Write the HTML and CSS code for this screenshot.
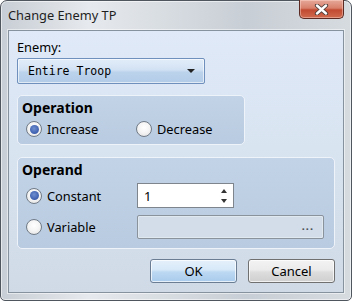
FILE: index.html
```html
<!DOCTYPE html>
<html lang="en">
<head>
  <meta charset="UTF-8" />
  <title>Change Enemy TP</title>
  <link rel="stylesheet" href="styles.css">
</head>
<body>
  <div class="window">
    <div class="titlebar">
      <span class="title">Change Enemy TP</span>
      <button type="button" class="close" aria-label="Close">
        <svg width="15" height="11" viewBox="0 0 15 11">
          <path d="M3 1.5 L12 9.5 M12 1.5 L3 9.5" stroke="#4a3b38" stroke-width="4.2" stroke-linecap="round" />
          <path d="M3 1.5 L12 9.5 M12 1.5 L3 9.5" stroke="#fff" stroke-width="2.4" stroke-linecap="round" />
        </svg>
      </button>
    </div>

    <div class="client">
      <div class="label">Enemy:</div>
      <div class="select">
        <span>Entire Troop</span>
        <span class="arrow"></span>
      </div>

      <section class="group group-operation">
        <h2>Operation</h2>
        <div class="row">
          <label class="option option-wide"><span class="radio is-checked"></span>Increase</label>
          <label class="option"><span class="radio"></span>Decrease</label>
        </div>
      </section>

      <section class="group group-operand">
        <h2>Operand</h2>
        <div class="row row-constant">
          <label class="option option-field"><span class="radio is-checked"></span>Constant</label>
          <div class="spin">
            <span class="value">1</span>
            <span class="spin-arrows">
              <span class="up"></span>
              <span class="down"></span>
            </span>
          </div>
        </div>
        <div class="row row-variable">
          <label class="option option-field"><span class="radio"></span>Variable</label>
          <div class="picker">...</div>
        </div>
      </section>

      <div class="actions">
        <button type="button" class="btn btn-default">OK</button>
        <button type="button" class="btn">Cancel</button>
      </div>
    </div>
  </div>
</body>
</html>
```

FILE: styles.css
```css
* {
  box-sizing: border-box;
}

body {
  margin: 0;
  font-family: "Noto Sans", "Open Sans", sans-serif;
  font-size: 12.8px;
  line-height: 16px;
  color: #000;
  background: #fff;
}

.window {
  width: 352px;
  height: 301px;
  display: flex;
  flex-direction: column;
  padding: 0 7px 7px;
  border: 1px solid #50565e;
  border-radius: 7px 7px 5px 5px;
  background:
    linear-gradient(to right, #c8ced5 0%, #e6e9ed 25%, #d9dee3 45%, #c8ced5 70%, #d6dbe0 100%);
  box-shadow: inset 0 0 0 1px rgba(255, 255, 255, 0.55);
}

.titlebar {
  height: 29px;
  display: flex;
  align-items: flex-start;
  flex-shrink: 0;

  .title {
    padding-top: 6px;
    font-size: 12.8px;
    color: #1e1e1e;
  }

  .close {
    margin: -1px 0 0 auto;
    width: 45px;
    height: 19px;
    padding: 0;
    display: flex;
    align-items: center;
    justify-content: center;
    border: 1px solid #5c2a22;
    border-top: 0;
    border-radius: 0 0 5px 5px;
    background: linear-gradient(#e6a898 0%, #d8806c 45%, #c24a32 55%, #cf6a4e 100%);
    box-shadow: inset 0 0 0 1px rgba(255, 220, 210, 0.45);
  }
}

.client {
  flex: 1;
  padding: 8px 8px 8px;
  border: 1px solid #87929f;
  background: linear-gradient(#dfe9f8 0%, #d9e4f1 45%, #cfdae6 100%);
  box-shadow: 0 0 0 1px rgba(255, 255, 255, 0.5);
}

.label {
  height: 16px;
}

.select {
  width: 188px;
  height: 26px;
  margin-top: 3px;
  display: flex;
  align-items: center;
  padding: 0 9px 0 10px;
  border: 1px solid #6f8fbc;
  border-radius: 2px;
  background: linear-gradient(#e3edf9 0%, #d2e2f4 45%, #bcd3ec 55%, #b2cbe7 100%);
  box-shadow: inset 0 0 0 1px rgba(255, 255, 255, 0.6);
  font-family: "DejaVu Sans Mono", "Liberation Mono", monospace;
  font-size: 11.5px;

  .arrow {
    margin-left: auto;
    width: 0;
    height: 0;
    border-left: 4px solid transparent;
    border-right: 4px solid transparent;
    border-top: 4px solid #222;
  }
}

.group {
  border: 1px solid #eef3fa;
  border-radius: 5px;
  background: linear-gradient(#c2d3e7, #b9cbe0);
  padding: 4px 4px 0;

  h2 {
    margin: 0;
    height: 16px;
    font-size: 14px;
    font-weight: 700;
  }
}

.group-operation {
  width: 228px;
  height: 50px;
  margin-top: 11px;
}

.group-operand {
  height: 92px;
  margin-top: 12px;
}

.row {
  display: flex;
  align-items: center;
  margin-top: 5px;
  padding-left: 4px;
  height: 16px;
}

.row-constant {
  height: 25px;
}

.row-variable {
  height: 24px;
  margin-top: 7px;
}

.option {
  display: flex;
  align-items: center;
  gap: 5px;
}

.option-wide {
  width: 110px;
}

.option-field {
  width: 111px;
}

.radio {
  width: 16px;
  height: 16px;
  border-radius: 50%;
  border: 1px solid #717b87;
  background: radial-gradient(circle at 50% 40%, #ffffff 0%, #f4f4f4 50%, #dcdcdc 100%);
  display: flex;
  align-items: center;
  justify-content: center;

  &.is-checked::after {
    content: "";
    width: 9px;
    height: 9px;
    border-radius: 50%;
    background: radial-gradient(circle at 45% 40%, #6f8fd0 0%, #4364b2 60%, #2f4f9a 100%);
  }
}

.spin {
  width: 97px;
  height: 25px;
  display: flex;
  align-items: center;
  padding: 0 6px 0 6px;
  border: 1px solid #7f858d;
  background: #fff;
  font-size: 13px;

  .spin-arrows {
    margin-left: auto;
    display: flex;
    flex-direction: column;
    gap: 6px;
  }

  .up,
  .down {
    width: 0;
    height: 0;
    border-left: 3.5px solid transparent;
    border-right: 3.5px solid transparent;
  }

  .up {
    border-bottom: 4px solid #333;
  }

  .down {
    border-top: 4px solid #333;
  }
}

.picker {
  width: 187px;
  height: 24px;
  padding: 0 9px 3px 0;
  display: flex;
  align-items: center;
  justify-content: flex-end;
  border: 1px solid #8a929c;
  border-radius: 2px;
  background: #d2dde9;
  box-shadow: inset 0 0 0 1px rgba(255, 255, 255, 0.35);
  color: #4a4f55;
  font-weight: 700;
  letter-spacing: 1px;
  font-size: 11px;
}

.actions {
  display: flex;
  justify-content: flex-end;
  gap: 11px;
  margin-top: 10px;
}

.btn {
  width: 87px;
  height: 24px;
  padding: 0;
  border: 1px solid #707070;
  border-radius: 3px;
  font: inherit;
  font-size: 13px;
  color: #000;
  background: linear-gradient(#f3f3f3 0%, #ebebeb 45%, #dddddd 55%, #cfcfcf 100%);
  box-shadow: inset 0 0 0 1px rgba(255, 255, 255, 0.7);
}

.btn-default {
  background: linear-gradient(#e5f1fb 0%, #d6e8f8 45%, #bcd8f2 55%, #a9cbec 100%);
  border-color: #6a7d93;
}
```
